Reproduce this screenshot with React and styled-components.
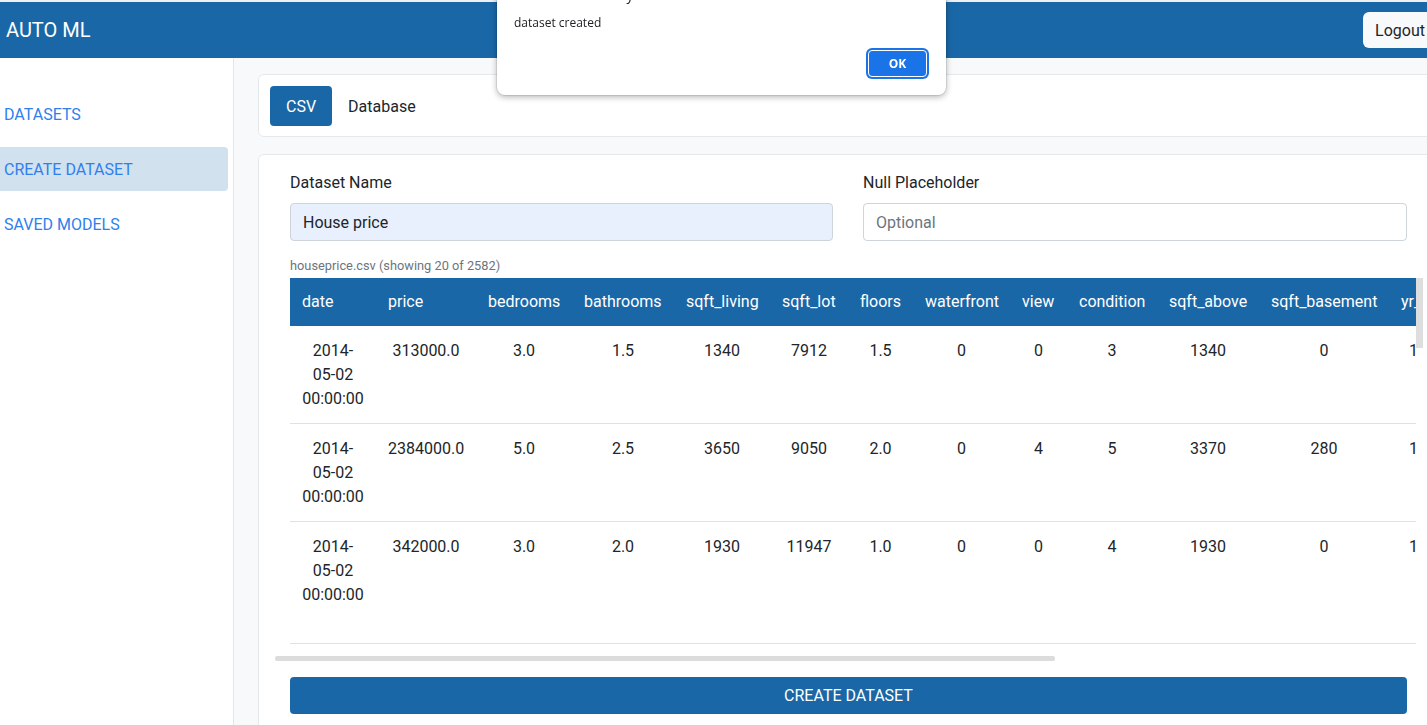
import React from 'react';
import styled, { createGlobalStyle } from 'styled-components';

const BLUE = '#1a67a7';

const GlobalStyle = createGlobalStyle`
  html, body { margin: 0; padding: 0; }
  body {
    font-family: Roboto, "Liberation Sans", Arial, sans-serif;
    color: #212529;
    background: #fff;
    overflow: hidden;
  }
  *, *::before, *::after { box-sizing: border-box; }
`;

const Page = styled.div`
  width: 1427px;
  height: 725px;
  display: flex;
  flex-direction: column;
  border-top: 2px solid #eef0f2;
  overflow: hidden;
`;

const Header = styled.header`
  flex: none;
  height: 56px;
  background: ${BLUE};
  display: flex;
  align-items: center;
  justify-content: space-between;
  padding-left: 6px;
`;

const Brand = styled.div`
  color: #fff;
  font-size: 20px;
  line-height: 24px;
`;

const LogoutButton = styled.button`
  height: 36px;
  margin-right: -10px;
  padding: 0 12px;
  background: #f8f9fa;
  border: none;
  border-radius: 6px;
  font-family: inherit;
  font-size: 16px;
  color: #212529;
`;

const Body = styled.div`
  flex: 1;
  display: flex;
  min-height: 0;
`;

const Sidebar = styled.nav`
  flex: none;
  width: 234px;
  background: #fff;
  border-right: 1px solid #e3e6e9;
  padding: 34px 5px 0 0;
  display: flex;
  flex-direction: column;
  gap: 11px;
`;

const NavItem = styled.div`
  height: 44px;
  display: flex;
  align-items: center;
  padding-left: 4px;
  font-size: 16px;
  color: #2f80ed;
  border-radius: 0 4px 4px 0;
  background: ${p => (p.$active ? '#d2e1ee' : 'transparent')};
`;

const Main = styled.main`
  flex: 1;
  min-width: 0;
  background: #f8f9fa;
  padding: 16px 0 0 24px;
  display: flex;
  flex-direction: column;
  gap: 17px;
  overflow: hidden;
`;

const TabCard = styled.div`
  flex: none;
  width: 1181px;
  background: #fff;
  border: 1px solid #e6e9ec;
  border-radius: 6px;
  padding: 11px 11px 10px;
  display: flex;
`;

const TabButton = styled.button`
  height: 40px;
  padding: 0 16px;
  border: none;
  border-radius: 4px;
  font-family: inherit;
  font-size: 16px;
  background: ${p => (p.$active ? BLUE : 'transparent')};
  color: ${p => (p.$active ? '#fff' : '#212529')};
`;

const FormCard = styled.section`
  flex: 1;
  width: 1181px;
  background: #fff;
  border: 1px solid #e6e9ec;
  border-radius: 6px 6px 0 0;
  padding: 15px 31px;
`;

const FieldRow = styled.div`
  display: grid;
  grid-template-columns: 543px 544px;
  column-gap: 30px;
`;

const Field = styled.div`
  display: flex;
  flex-direction: column;
`;

const Label = styled.label`
  font-size: 16px;
  line-height: 24px;
  margin-bottom: 9px;
  margin-top: 1px;
`;

const Input = styled.input`
  height: 38px;
  margin-top: -1px;
  border: 1px solid #ced4da;
  border-radius: 4px;
  padding: 0 12px;
  font-family: inherit;
  font-size: 16px;
  color: #212529;
  background: ${p => (p.$filled ? '#e8f0fe' : '#fff')};
  &::placeholder { color: #6c757d; }
`;

const Caption = styled.div`
  margin-top: 15px;
  margin-bottom: 2px;
  font-size: 12.8px;
  line-height: 20px;
  color: #6c757d;
`;

const TableFrame = styled.div`
  display: flex;
  width: 1133px;
  height: 366px;
`;

const TableViewport = styled.div`
  flex: none;
  width: 1126px;
  height: 100%;
  overflow: hidden;
`;

const ScrollTrack = styled.div`
  flex: none;
  width: 7px;
  height: 100%;
  background: #fff;
`;

const ScrollThumb = styled.div`
  height: 70px;
  background: #dedede;
`;

const Table = styled.table`
  table-layout: fixed;
  border-collapse: collapse;
  width: ${p => p.$width}px;
`;

const Col = styled.col`
  width: ${p => p.$w}px;
`;

const Th = styled.th`
  background: ${BLUE};
  color: #fff;
  font-weight: 400;
  font-size: 16px;
  line-height: 24px;
  text-align: left;
  padding: 12px;
  white-space: nowrap;
  overflow: hidden;
`;

const Td = styled.td`
  font-size: 16px;
  line-height: 24px;
  text-align: center;
  vertical-align: top;
  padding: 13px 12px 12px;
  border-bottom: 1px solid #dee2e6;
  color: #212529;
`;

const HScrollThumb = styled.div`
  margin: 12px 0 0 -15px;
  width: 780px;
  height: 5px;
  background: #dcdcdc;
  border-radius: 2px;
`;

const CreateButton = styled.button`
  display: block;
  margin-top: 16px;
  width: 1117px;
  height: 37px;
  background: ${BLUE};
  color: #fff;
  border: none;
  border-radius: 4px;
  font-family: inherit;
  font-size: 16px;
  text-transform: uppercase;
`;

const Dialog = styled.div`
  position: fixed;
  left: 497px;
  top: -27px;
  width: 449px;
  background: #fff;
  border-radius: 8px;
  box-shadow: 0 2px 6px rgba(0, 0, 0, 0.3), 0 0 0 1px rgba(0, 0, 0, 0.08);
  padding: 12px 17px 18px;
  font-family: "Open Sans", "Noto Sans", sans-serif;
  color: #202124;
  display: flex;
  flex-direction: column;
`;

const DialogTitle = styled.div`
  font-size: 14px;
  line-height: 20px;
  margin-bottom: 10px;
`;

const DialogMessage = styled.div`
  font-size: 12px;
  line-height: 16px;
  margin-bottom: 19px;
`;

const DialogActions = styled.div`
  display: flex;
  justify-content: flex-end;
  padding-right: 2px;
`;

const OkButton = styled.button`
  width: 59px;
  height: 27px;
  background: #1b73e8;
  color: #fff;
  border: 1px solid #fff;
  border-radius: 4px;
  box-shadow: 0 0 0 2px #1b73e8;
  font-family: "Open Sans", "Noto Sans", sans-serif;
  font-weight: 700;
  font-size: 12px;
`;

const columns = [
  ['date', 86], ['price', 100], ['bedrooms', 96], ['bathrooms', 102],
  ['sqft_living', 96], ['sqft_lot', 78], ['floors', 65], ['waterfront', 97],
  ['view', 57], ['condition', 90], ['sqft_above', 102], ['sqft_basement', 130],
  ['yr_built', 76], ['yr_renovated', 120], ['street', 100], ['city', 100],
  ['statezip', 96], ['country', 84],
];

const D = '2014-05-02 00:00:00';
const rows = [
  [D, '313000.0', '3.0', '1.5', '1340', '7912', '1.5', '0', '0', '3', '1340', '0', '1955', '2005', '18810 Densmore Ave N', 'Shoreline', 'WA 98133', 'USA'],
  [D, '2384000.0', '5.0', '2.5', '3650', '9050', '2.0', '0', '4', '5', '3370', '280', '1921', '0', '709 W Blaine St', 'Seattle', 'WA 98119', 'USA'],
  [D, '342000.0', '3.0', '2.0', '1930', '11947', '1.0', '0', '0', '4', '1930', '0', '1966', '0', '26206-26214 143rd Ave SE', 'Kent', 'WA 98042', 'USA'],
  [D, '420000.0', '3.0', '2.25', '2000', '8030', '1.0', '0', '0', '4', '1000', '1000', '1963', '0', '857 170th Pl NE', 'Bellevue', 'WA 98008', 'USA'],
  [D, '550000.0', '4.0', '2.5', '1940', '10500', '1.0', '0', '0', '4', '1140', '800', '1976', '1992', '9105 170th Ave NE', 'Redmond', 'WA 98052', 'USA'],
  [D, '490000.0', '2.0', '1.0', '880', '6380', '1.0', '0', '0', '3', '880', '0', '1938', '1994', '522 NE 88th St', 'Seattle', 'WA 98115', 'USA'],
  [D, '335000.0', '2.0', '2.0', '1350', '2560', '1.0', '0', '0', '3', '1350', '0', '1976', '0', '2616 174th Ave NE', 'Redmond', 'WA 98052', 'USA'],
  [D, '482000.0', '4.0', '2.5', '2710', '35868', '2.0', '0', '0', '3', '2710', '0', '1989', '0', '23762 SE 253rd Pl', 'Maple Valley', 'WA 98038', 'USA'],
  [D, '452500.0', '3.0', '2.5', '2430', '88426', '1.0', '0', '0', '4', '1570', '860', '1985', '0', '46611-46625 SE 129th St', 'North Bend', 'WA 98045', 'USA'],
  [D, '640000.0', '4.0', '2.0', '1520', '6200', '1.5', '0', '0', '3', '1520', '0', '1945', '2010', '6811 55th Ave NE', 'Seattle', 'WA 98115', 'USA'],
  [D, '463000.0', '3.0', '1.75', '1710', '7320', '1.0', '0', '0', '3', '1710', '0', '1948', '1994', 'Burke-Gilman Trail', 'Lake Forest Park', 'WA 98155', 'USA'],
  [D, '1400000.0', '4.0', '2.5', '2920', '4000', '1.5', '0', '0', '5', '1910', '1010', '1909', '1988', '3838-4098 44th Ave NE', 'Seattle', 'WA 98105', 'USA'],
  [D, '588500.0', '3.0', '1.75', '2330', '14892', '1.0', '0', '0', '3', '1970', '360', '1980', '0', '1833 220th Pl NE', 'Sammamish', 'WA 98074', 'USA'],
  [D, '365000.0', '3.0', '1.0', '1090', '6435', '1.0', '0', '0', '4', '1090', '0', '1955', '2009', '2504 SW Portland Ct', 'Seattle', 'WA 98106', 'USA'],
  [D, '1200000.0', '5.0', '2.75', '2910', '9480', '1.5', '0', '0', '3', '2910', '0', '1939', '1969', '3534 46th Ave NE', 'Seattle', 'WA 98105', 'USA'],
  [D, '242500.0', '3.0', '1.5', '1200', '9720', '1.0', '0', '0', '4', '1200', '0', '1965', '0', '14034 SE 201st St', 'Kent', 'WA 98042', 'USA'],
  [D, '419000.0', '3.0', '1.5', '1570', '6700', '1.0', '0', '0', '4', '1570', '0', '1956', '0', '15424 SE 9th St', 'Bellevue', 'WA 98007', 'USA'],
  [D, '367500.0', '4.0', '3.0', '3110', '7231', '2.0', '0', '0', '3', '3110', '0', '1997', '0', '11224 SE 306th Pl', 'Auburn', 'WA 98092', 'USA'],
  [D, '257950.0', '3.0', '1.75', '1370', '5858', '1.0', '0', '0', '3', '1370', '0', '1987', '2000', '1605 S 245th Pl', 'Des Moines', 'WA 98198', 'USA'],
  [D, '275000.0', '3.0', '1.5', '1180', '10277', '1.0', '0', '0', '3', '1180', '0', '1983', '2009', '12425 415th Ave SE', 'North Bend', 'WA 98045', 'USA'],
];

const tableWidth = columns.reduce((s, c) => s + c[1], 0);

export default function App() {
  return (
    <>
      <GlobalStyle />
      <Page>
        <Header>
          <Brand>AUTO ML</Brand>
          <LogoutButton>Logout</LogoutButton>
        </Header>
        <Body>
          <Sidebar>
            <NavItem>DATASETS</NavItem>
            <NavItem $active>CREATE DATASET</NavItem>
            <NavItem>SAVED MODELS</NavItem>
          </Sidebar>
          <Main>
            <TabCard>
              <TabButton $active>CSV</TabButton>
              <TabButton>Database</TabButton>
            </TabCard>
            <FormCard>
              <FieldRow>
                <Field>
                  <Label>Dataset Name</Label>
                  <Input $filled defaultValue="House price" />
                </Field>
                <Field>
                  <Label>Null Placeholder</Label>
                  <Input placeholder="Optional" />
                </Field>
              </FieldRow>
              <Caption>houseprice.csv (showing 20 of 2582)</Caption>
              <TableFrame>
                <TableViewport>
                  <Table $width={tableWidth}>
                    <colgroup>
                      {columns.map(([name, w]) => (
                        <Col key={name} $w={w} />
                      ))}
                    </colgroup>
                    <thead>
                      <tr>
                        {columns.map(([name]) => (
                          <Th key={name}>{name}</Th>
                        ))}
                      </tr>
                    </thead>
                    <tbody>
                      {rows.map((r, i) => (
                        <tr key={i}>
                          {r.map((v, j) => (
                            <Td key={j}>{v}</Td>
                          ))}
                        </tr>
                      ))}
                    </tbody>
                  </Table>
                </TableViewport>
                <ScrollTrack>
                  <ScrollThumb />
                </ScrollTrack>
              </TableFrame>
              <HScrollThumb />
              <CreateButton>Create Dataset</CreateButton>
            </FormCard>
          </Main>
        </Body>
        <Dialog>
          <DialogTitle>localhost:3000 says</DialogTitle>
          <DialogMessage>dataset created</DialogMessage>
          <DialogActions>
            <OkButton>OK</OkButton>
          </DialogActions>
        </Dialog>
      </Page>
    </>
  );
}
